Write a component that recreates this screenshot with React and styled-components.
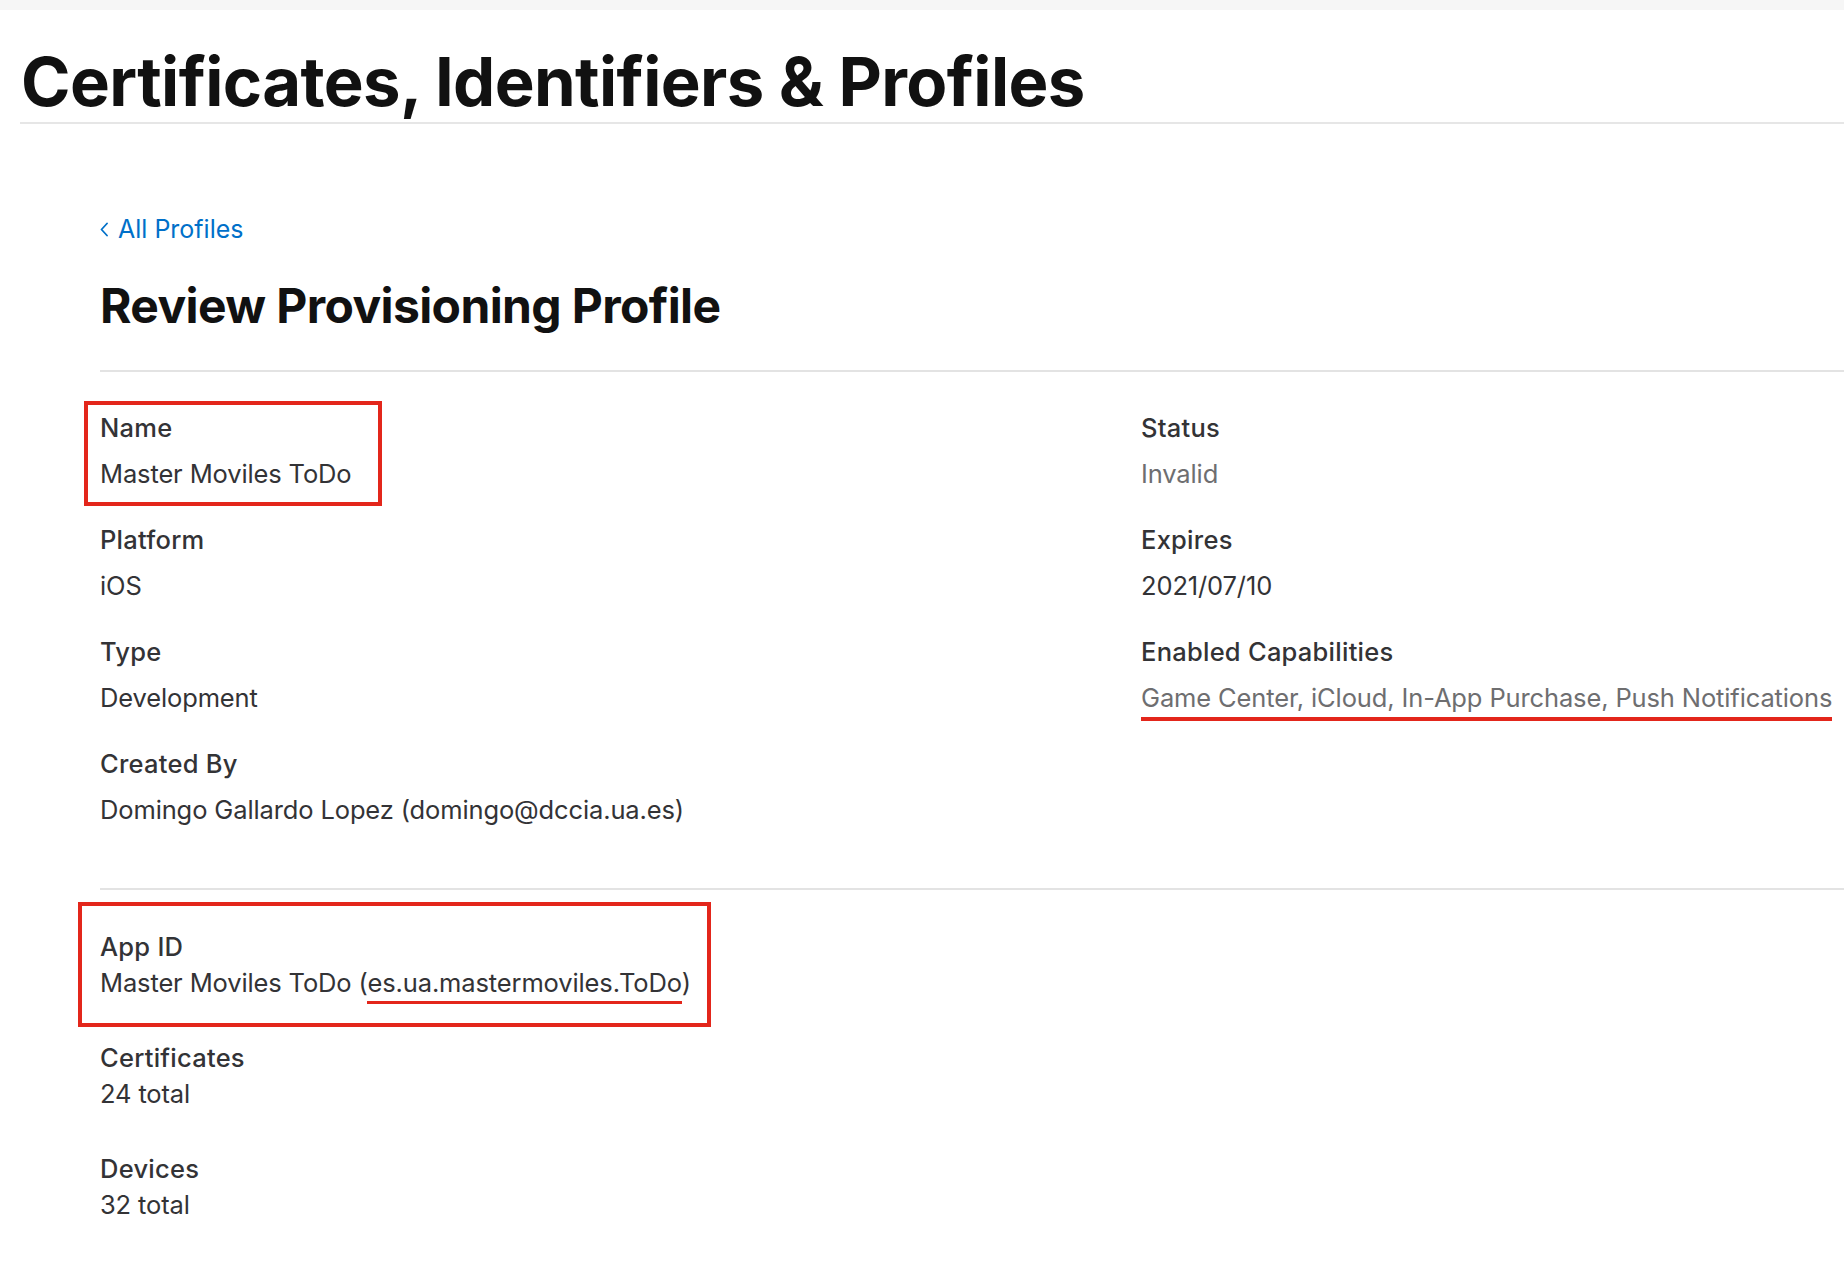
import React from "react";
import styled, { createGlobalStyle } from "styled-components";

const Global = createGlobalStyle`
  html, body { margin: 0; padding: 0; background: #fff; }
  body {
    font-family: Inter, "Liberation Sans", Arial, sans-serif;
    -webkit-font-smoothing: antialiased;
  }
`;

const Page = styled.div`
  width: 1844px;
  min-height: 1262px;
  overflow: hidden;
  background: #fff;
`;

const TopBand = styled.div`
  height: 10px;
  background: #f6f6f6;
`;

const Header = styled.header`
  margin-left: 20px;
  padding-top: 38px;
  padding-bottom: 6px;
  border-bottom: 2px solid #e6e6e6;
`;

const Title = styled.h1`
  margin: 0;
  padding-left: 1px;
  font-size: 67px;
  line-height: 68px;
  font-weight: 700;
  letter-spacing: -0.62px;
  color: #111;
  white-space: nowrap;
`;

const Content = styled.main`
  padding-left: 100px;
  padding-top: 90px;
`;

const BackLink = styled.a`
  display: inline-flex;
  align-items: center;
  gap: 10px;
  font-size: 25px;
  line-height: 30px;
  letter-spacing: 0px;
  color: #0070c9;
  text-decoration: none;
  cursor: pointer;
`;

const Heading = styled.h2`
  margin: 34px 0 0;
  font-size: 48px;
  line-height: 56px;
  font-weight: 700;
  letter-spacing: -0.62px;
  color: #111;
`;

const Divider = styled.hr`
  margin: ${(p) => p.$top ?? 36}px 0 0;
  border: 0;
  border-top: 2px solid #e3e3e3;
  height: 0;
`;

const Section = styled.section`
  display: grid;
  grid-template-columns: 1041px 1fr;
  padding: ${(p) => p.$pad};
`;

const Column = styled.dl`
  margin: 0;
  display: flex;
  flex-direction: column;
  gap: ${(p) => p.$gap}px;
`;

const Field = styled.div`
  position: relative;
  display: flex;
  flex-direction: column;
`;

const Label = styled.dt`
  font-size: 25.5px;
  line-height: ${(p) => p.$lh}px;
  font-weight: 500;
  letter-spacing: 0.25px;
  color: #333336;
  white-space: nowrap;
`;

const Value = styled.dd`
  margin: 0;
  font-size: 25.5px;
  line-height: ${(p) => p.$lh}px;
  font-weight: 400;
  letter-spacing: -0.13px;
  color: ${(p) => (p.$muted ? "#6e6e70" : "#333336")};
  white-space: nowrap;
`;

const Marked = styled.span`
  padding-bottom: ${(p) => p.$offset}px;
  border-bottom: ${(p) => p.$thick}px solid #e3261b;
`;

const Annotation = styled.span`
  position: absolute;
  top: ${(p) => p.$top}px;
  left: ${(p) => p.$left}px;
  width: ${(p) => p.$w}px;
  height: ${(p) => p.$h}px;
  box-sizing: border-box;
  border: 4px solid #e3261b;
  pointer-events: none;
`;

const Chevron = () => (
  <svg width="8" height="15" viewBox="0 0 8 15" fill="none" aria-hidden="true">
    <polyline
      points="7,1.5 1.5,7.5 7,13.5"
      stroke="#0070c9"
      strokeWidth="1.8"
      strokeLinecap="round"
      strokeLinejoin="round"
    />
  </svg>
);

function Item({ label, value, lh, muted, children }) {
  return (
    <Field>
      <Label $lh={lh}>{label}</Label>
      <Value $lh={lh} $muted={muted}>
        {value}
      </Value>
      {children}
    </Field>
  );
}

export default function App() {
  return (
    <Page>
      <Global />
      <TopBand />
      <Header>
        <Title>Certificates, Identifiers &amp; Profiles</Title>
      </Header>
      <Content>
        <BackLink>
          <Chevron />
          All Profiles
        </BackLink>
        <Heading>Review Provisioning Profile</Heading>
        <Divider />
        <Section $pad="33px 0 55px">
          <Column $gap={20}>
            <Item label="Name" value="Master Moviles ToDo" lh={46}>
              <Annotation $top={-4} $left={-16} $w={298} $h={105} />
            </Item>
            <Item label="Platform" value="iOS" lh={46} />
            <Item label="Type" value="Development" lh={46} />
            <Item
              label="Created By"
              value="Domingo Gallardo Lopez (domingo@dccia.ua.es)"
              lh={46}
            />
          </Column>
          <Column $gap={20}>
            <Item label="Status" value="Invalid" lh={46} muted />
            <Item label="Expires" value="2021/07/10" lh={46} />
            <Item
              label="Enabled Capabilities"
              lh={46}
              muted
              value={
                <Marked $offset={4} $thick={4}>
                  Game Center, iCloud, In-App Purchase, Push Notifications
                </Marked>
              }
            />
          </Column>
        </Section>
        <Divider $top={0} />
        <Section $pad="39px 0 40px">
          <Column $gap={39}>
            <Item
              label="App ID"
              lh={36}
              value={
                <>
                  Master Moviles ToDo (
                  <Marked $offset={3} $thick={3}>
                    es.ua.mastermoviles.ToDo
                  </Marked>
                  )
                </>
              }
            >
              <Annotation $top={-27} $left={-22} $w={633} $h={125} />
            </Item>
            <Item label="Certificates" value="24 total" lh={36} />
            <Item label="Devices" value="32 total" lh={36} />
          </Column>
        </Section>
      </Content>
    </Page>
  );
}
